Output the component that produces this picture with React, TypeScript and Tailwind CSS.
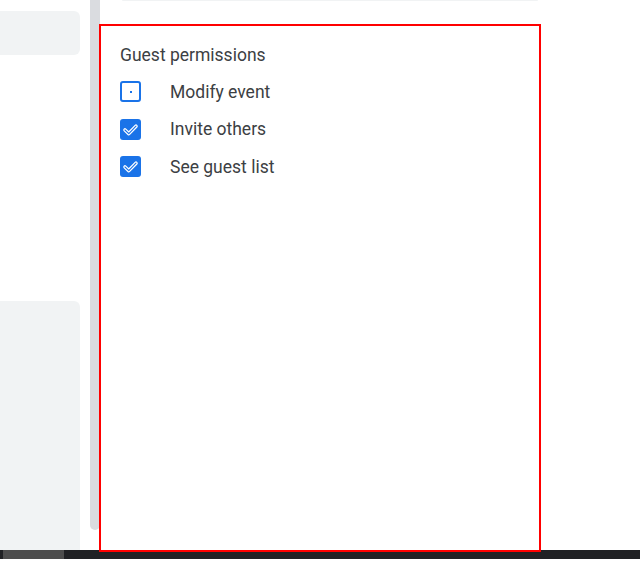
const permissions = [
  { label: 'Modify event', checked: false },
  { label: 'Invite others', checked: true },
  { label: 'See guest list', checked: true },
];

function Checkbox({ checked }: { checked: boolean }) {
  if (!checked) {
    return (
      <div className="w-[21px] h-[21px] rounded-[3px] border-2 border-[#1a73e8] flex items-center justify-center shrink-0">
        <div className="w-[2px] h-[2px] bg-[#1a73e8]" />
      </div>
    );
  }
  return (
    <div className="w-[21px] h-[21px] rounded-[3px] bg-[#1a73e8] flex items-center justify-center shrink-0">
      <svg width="21" height="21" viewBox="0 0 21 21" fill="none">
        <path d="M5 11 L8.8 14.6 L16 7.2" stroke="#fff" strokeWidth="3.6" strokeLinecap="round" strokeLinejoin="round" />
        <path d="M5 11 L8.8 14.6 L16 7.2" stroke="#1a73e8" strokeWidth="1.1" strokeLinecap="round" strokeLinejoin="round" />
      </svg>
    </div>
  );
}

export default function App() {
  return (
    <div className="relative w-[640px] h-[576px] bg-white overflow-hidden" style={{ fontFamily: 'Roboto, "Noto Sans", sans-serif' }}>
      <div className="flex h-[550px]">
        {/* left pane */}
        <div className="w-[80px] flex flex-col">
          <div className="mt-[11px] h-[44px] bg-[#f1f3f4] rounded-r-[6px]" />
          <div className="mt-[246px] flex-1 bg-[#f1f3f4] rounded-tr-[6px]" />
        </div>
        <div className="w-[10px]" />
        {/* splitter */}
        <div className="w-[10px] h-[530px] bg-[#dadce0] rounded-b-[5px]" />
        {/* content */}
        <div className="flex-1 flex flex-col">
          <div className="ml-[22px] w-[416px] h-[1px] bg-[#f1f3f4] rounded-b" />
          <div className="pl-[20px] pt-[42px]">
            <div className="text-[17.5px] leading-6 text-[#3c4043] mb-[6px]">Guest permissions</div>
            {permissions.map((p) => (
              <div key={p.label} className="h-[37.5px] flex items-center">
                <Checkbox checked={p.checked} />
                <span className="ml-[29px] text-[17.5px] text-[#3c4043]">{p.label}</span>
              </div>
            ))}
          </div>
        </div>
      </div>
      {/* horizontal scrollbar */}
      <div className="h-[9px] bg-[#202124] pl-[3px]">
        <div className="w-[61px] h-full bg-[#4d4d4d]" />
      </div>
      {/* highlight frame */}
      <div className="absolute left-[99px] top-[24px] w-[442px] h-[528px] border-2 border-[#ff0000] pointer-events-none" />
    </div>
  );
}
